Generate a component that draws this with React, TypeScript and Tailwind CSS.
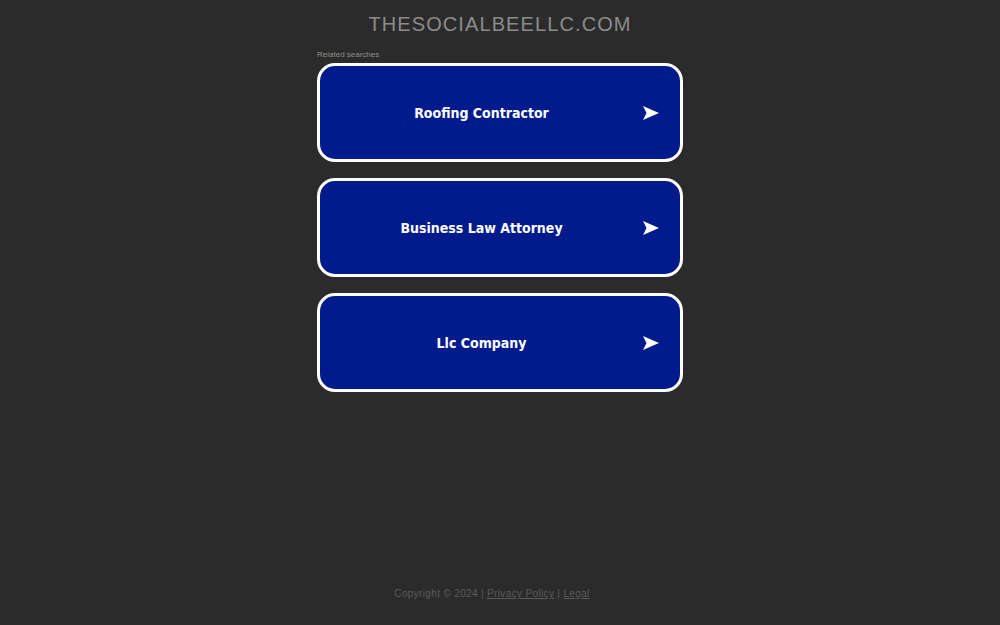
const searches = ["Roofing Contractor", "Business Law Attorney", "Llc Company"];

function Arrow() {
  return (
    <svg viewBox="0 0 16 14" className="h-[14px] w-[16px]" aria-hidden="true">
      <polygon points="0,0 16,7 0,14 3.5,7" fill="#ffffff" />
    </svg>
  );
}

export default function App() {
  return (
    <div className="flex min-h-[625px] flex-col items-center bg-[#2b2b2b] font-['Liberation_Sans',Arial,sans-serif]">
      <h1 className="mt-[12px] text-[20px] leading-[24px] tracking-[1.1px] text-[#8c8c8c]">
        THESOCIALBEELLC.COM
      </h1>
      <div className="mt-[13px] w-[366px]">
        <p className="text-[8px] leading-[11px] text-[#8f8f8f]">Related searches</p>
        <div className="mt-[3px] flex flex-col gap-[16px]">
          {searches.map((s) => (
            <a
              key={s}
              href="#"
              className="flex h-[99px] items-center rounded-[18px] border-[3px] border-white bg-[#011a8c] pr-[21px]"
            >
              <span className="flex-1 text-center font-['DejaVu_Sans_Condensed','DejaVu_Sans',Verdana,sans-serif] text-[14px] font-bold leading-[18px] text-white">
                {s}
              </span>
              <Arrow />
            </a>
          ))}
        </div>
      </div>
      <footer className="mt-auto mb-[25px] mr-[16px] text-[10px] leading-[12px] tracking-[0.35px] text-[#5a5a5a]">
        Copyright © 2024 | <a href="#" className="underline">Privacy Policy</a> |{" "}
        <a href="#" className="underline">Legal</a>
      </footer>
    </div>
  );
}
